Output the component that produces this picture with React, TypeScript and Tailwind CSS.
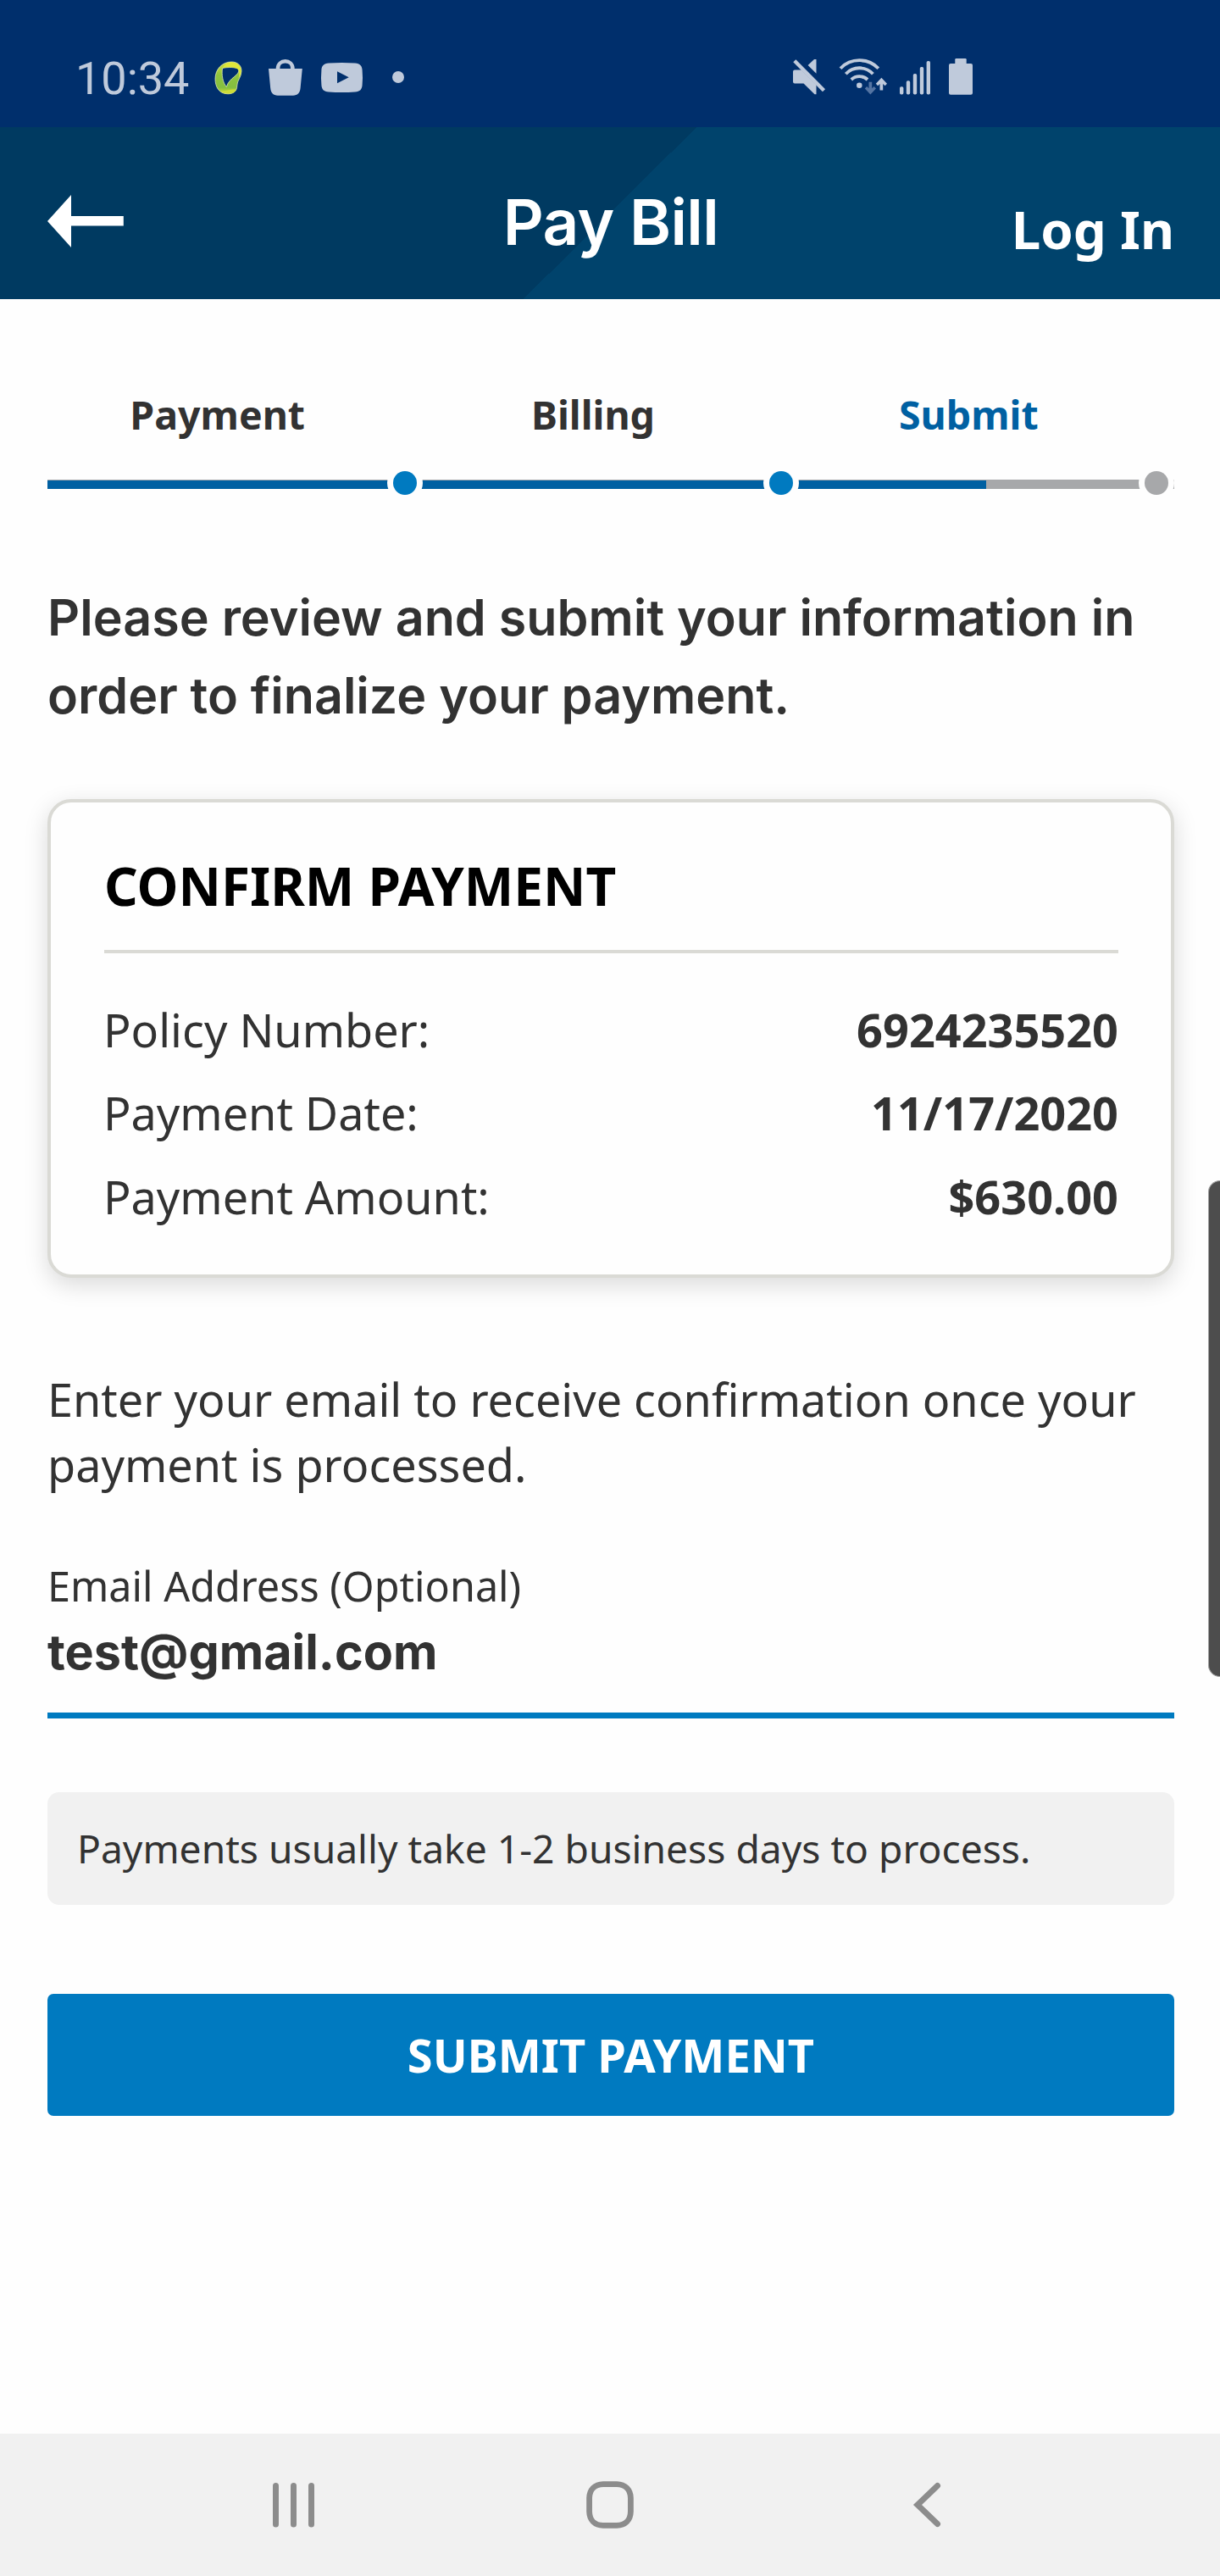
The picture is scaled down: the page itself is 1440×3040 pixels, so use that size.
import React from "react";

const ICON = "#bfcadb";

function SwirlIcon() {
  return (
    <svg className="ml-[26px]" width="40" height="50" viewBox="250 66 40 50">
      <defs>
        <linearGradient id="swirl" x1="0" y1="0" x2="0" y2="1">
          <stop offset="0" stopColor="#d7e03a" />
          <stop offset="0.4" stopColor="#8fc43e" />
          <stop offset="0.8" stopColor="#84bf41" />
          <stop offset="1" stopColor="#d3df38" />
        </linearGradient>
      </defs>
      <path
        fillRule="evenodd"
        fill="url(#swirl)"
        stroke="#eef5c8"
        strokeWidth="0.7"
        d="M273.3 73C280 73 285.2 77 285 84C285 91 279.8 95 279.8 101C279.8 108 275 110.8 269 110.8C258 110.8 254 102 254 93C254 82 262 73 273.3 73ZM262.6 80.5C269 79 278 79.3 281.8 81.3C283.5 89.5 270.5 91 267.4 102.5C263 98 261.3 88 262.6 80.5Z"
      />
      <path fill="#dfe63a" d="M273.3 73.5C279.5 73.5 284.7 77 284.6 84C284.5 87.5 283 90 281.5 92.5C283.2 86 282.6 81.5 278 80.2C272 78.6 266 79.4 262.6 80.5C265 76 268.5 73.5 273.3 73.5Z" />
      <path fill="#cddc39" d="M260.5 107.5C264 107.5 268 106.5 271 106C275 105.3 278 105.5 279 105.5C277.5 109.5 274.5 110.5 269 110.5C265 110.5 262 109.3 260.5 107.5Z" />
    </svg>
  );
}

function BagIcon() {
  return (
    <svg className="ml-[22px]" width="50" height="50" viewBox="312 66 50 50">
      <path fill="none" stroke={ICON} strokeWidth="4.6" d="M328 82V81C328 75.5 332 72.3 336.7 72.3C341.4 72.3 345.4 75.5 345.4 81V82" />
      <path fill={ICON} d="M317 81H356.8L354.6 104C354.1 109.5 351 112.7 346 112.7H327.8C322.8 112.7 319.7 109.5 319.2 104Z" />
    </svg>
  );
}

function VideoIcon() {
  return (
    <svg className="ml-3" width="60" height="50" viewBox="374 66 60 50">
      <path
        fillRule="evenodd"
        fill={ICON}
        d="M388 74.5Q403.5 73.3 419 74.5C425 75 427.3 77.5 427.6 83Q428.4 91.5 427.6 100C427.3 105.5 425 108 419 108.5Q403.5 109.7 388 108.5C382 108 379.7 105.5 379.4 100Q378.6 91.5 379.4 83C379.7 77.5 382 75 388 74.5ZM398 84.3V98.3L411.7 91.3Z"
      />
    </svg>
  );
}

function MuteIcon() {
  return (
    <svg className="ml-[453px]" width="50" height="50" viewBox="930 66 50 50">
      <path fill={ICON} d="M938 82.5H946L963.5 100V111.3H961.5L948.5 98.5H938Q936 98.5 936 96.5V84.5Q936 82.5 938 82.5Z" />
      <path fill={ICON} d="M963.5 70V86.8L953.6 77L961 70Z" />
      <path stroke={ICON} strokeWidth="4.4" d="M937.8 71.8L972.5 106.7" />
    </svg>
  );
}

function WifiIcon() {
  return (
    <svg className="ml-[5px]" width="65" height="50" viewBox="985 66 65 50">
      <g fill="none" stroke={ICON} strokeWidth="3.8">
        <path d="M992 80.7A31.2 31.2 0 0 1 1036.8 80.7" />
        <path d="M998.3 87.2A22 22 0 0 1 1030.4 87.2" />
        <path d="M1004.8 94A14 14 0 0 1 1024 94" />
      </g>
      <circle cx="1014.3" cy="100.7" r="3.3" fill={ICON} />
      <path fill="#5474a2" d="M1025.5 96.7H1029.2V104.3L1031.6 102L1034 104.4L1027.4 111.4L1020.8 104.4L1023.2 102L1025.5 104.3Z" />
      <path fill={ICON} d="M1038.5 106.5H1042.2V98.9L1044.6 101.2L1047 98.8L1040.4 91.8L1033.8 98.8L1036.2 101.2L1038.5 98.9Z" />
    </svg>
  );
}

function SignalIcon() {
  const bars = [
    [1062, 102.3],
    [1069.8, 95.3],
    [1077.8, 87],
    [1085.8, 79],
    [1093.6, 72],
  ];
  return (
    <svg className="ml-1.5" width="48" height="50" viewBox="1056 66 48 50">
      {bars.map(([x, y]) => (
        <rect key={x} x={x} y={y} width="4.4" height={111.5 - y} rx="1.8" fill={ICON} />
      ))}
    </svg>
  );
}

function BatteryIcon() {
  return (
    <svg className="ml-2.5" width="40" height="50" viewBox="1114 66 40 50">
      <rect x="1127.3" y="69" width="13.4" height="10" rx="1.3" fill={ICON} />
      <rect x="1120" y="75" width="28" height="36.7" rx="2" fill={ICON} />
    </svg>
  );
}

function StatusBar() {
  return (
    <div className="flex h-[150px] items-center bg-[#002f6c] pt-8 pl-[89px]">
      <span className="mt-[3px] w-[135px] font-['Roboto',sans-serif] text-[54px] leading-[60px] whitespace-nowrap text-[#bfcadb]">10:34</span>
      <SwirlIcon />
      <BagIcon />
      <VideoIcon />
      <span className="ml-[29px] size-3.5 rounded-full bg-[#bfcadb]" />
      <MuteIcon />
      <WifiIcon />
      <SignalIcon />
      <BatteryIcon />
    </div>
  );
}

function Header() {
  return (
    <header className="grid h-[203px] grid-cols-[1fr_auto_1fr] items-center bg-[linear-gradient(135.2deg,#003a61_0_50%,#00436c_50%)] px-14 pt-5">
      <svg className="mb-0.5 h-[62px] w-[90px]" viewBox="0 0 90 62">
        <path fill="#fff" d="M0 31L28 0V25H89.8V36.5H28V62Z" />
      </svg>
      <h1 className="ml-0.5 font-['Inter',sans-serif] text-[74.5px] leading-[90px] font-semibold tracking-[-0.6px] whitespace-nowrap text-white">Pay Bill</h1>
      <span className="mt-[17px] -mr-0.5 justify-self-end text-[61.7px] leading-[80px] font-bold text-white">Log In</span>
    </header>
  );
}

const STEPS = [
  { label: "Payment", text: "text-[#323232]", dot: "bg-[#007ac0]" },
  { label: "Billing", text: "text-[#323232]", dot: "bg-[#007ac0]" },
  { label: "Submit", text: "text-[#0060a2]", dot: "bg-[#a7a8aa]" },
];

function Stepper() {
  return (
    <div className="relative mt-[104px]">
      <div className="absolute top-[109px] left-0 h-[11px] w-full bg-[#a7a8aa] pt-px">
        <div className="h-2.5 w-5/6 bg-[#0060a2]" />
      </div>
      <div className="relative grid grid-cols-3">
        {STEPS.map((s) => (
          <div key={s.label} className="flex flex-col gap-7">
            <span className={`pr-[42px] text-center text-[46.5px] leading-[64px] font-bold ${s.text}`}>{s.label}</span>
            <span className="flex size-[42px] items-center justify-center self-end rounded-full bg-[#fefefe]">
              <span className={`size-7 rounded-full ${s.dot}`} />
            </span>
          </div>
        ))}
      </div>
    </div>
  );
}

const DETAILS = [
  ["Policy Number:", "6924235520"],
  ["Payment Date:", "11/17/2020"],
  ["Payment Amount:", "$630.00"],
];

function ConfirmCard() {
  return (
    <section className="mt-[76px] h-[565px] rounded-[28px] border-4 border-[#dadad5] bg-[#fefefe] pt-[58px] pr-[62px] pl-[63px] shadow-[0_8px_28px_rgba(0,0,0,0.15)]">
      <h2 className="text-[62px] leading-[80px] font-bold text-black">CONFIRM PAYMENT</h2>
      <div className="mt-[36px] h-1 bg-[#dadad5]" />
      <dl className="mt-[41px] text-[54px] leading-[98.3px]">
        {DETAILS.map(([k, v]) => (
          <div key={k} className="flex justify-between">
            <dt className="-ml-px text-[53.9px]">{k}</dt>
            <dd className="font-bold">{v}</dd>
          </div>
        ))}
      </dl>
    </section>
  );
}

function NavBar() {
  return (
    <nav className="flex h-[168px] items-center justify-between bg-[#f1f1f1] px-[316px]">
      <svg width="61" height="60" viewBox="0 0 61 60" fill="#8c8c8c">
        <rect x="6" y="4" width="7" height="52.5" rx="3.5" />
        <rect x="27" y="4" width="7" height="52.5" rx="3.5" />
        <rect x="48" y="4" width="7" height="52.5" rx="3.5" />
      </svg>
      <svg width="60" height="60" viewBox="0 0 60 60">
        <path fill="none" stroke="#8c8c8c" strokeWidth="6.8" d="M30 5.6H38C48 5.8 54.2 12 54.4 22V38C54.2 48 48 54.2 38 54.4H22C12 54.2 5.8 48 5.6 38V22C5.8 12 12 5.8 22 5.6Z" />
      </svg>
      <svg width="61" height="60" viewBox="0 0 61 60">
        <path fill="none" stroke="#8c8c8c" strokeWidth="7" strokeLinecap="round" d="M43.5 7.5L20 30L43.5 52.5" />
      </svg>
    </nav>
  );
}

export default function App() {
  return (
    <div className="relative flex h-[3040px] w-[1440px] flex-col overflow-hidden bg-[#fefefe] font-['Noto_Sans',sans-serif] text-[#323232]">
      <StatusBar />
      <Header />
      <main className="flex-1 px-[54px] pl-14">
        <div className="w-[1330px]">
          <Stepper />
          <p className="mt-[92px] font-['Inter',sans-serif] text-[59.2px] leading-[92px] font-semibold whitespace-nowrap">
            Please review and submit your information in
            <br />
            order to finalize your payment.
          </p>
          <ConfirmCard />
          <p className="mt-[105px] text-[53.94px] leading-[77px] whitespace-nowrap">
            Enter your email to receive confirmation once your
            <br />
            payment is processed.
          </p>
          <div className="mt-[71px] border-b-[7px] border-[#007ac0] pb-8">
            <div className="text-[48.5px] leading-[66px]">Email Address (Optional)</div>
            <div className="mt-[5px] font-['Inter',sans-serif] text-[57.5px] leading-[80px] font-bold">test@gmail.com</div>
          </div>
          <div className="mt-[87px] flex h-[133px] items-center rounded-[14px] bg-[#f1f1f1] pl-[35px] text-[46.2px] leading-[64px] whitespace-nowrap">
            Payments usually take 1-2 business days to process.
          </div>
          <button className="mt-[105px] flex h-36 w-full items-center justify-center rounded-[7px] bg-[#007ac0] text-[54.2px] leading-[74px] font-bold text-white">
            SUBMIT PAYMENT
          </button>
        </div>
      </main>
      <NavBar />
      <div className="absolute top-[1393px] right-0 h-[586px] w-3.5 rounded-l-[14px] border border-r-0 border-[#a0a0a0] bg-[#4d4d4d]" />
    </div>
  );
}
